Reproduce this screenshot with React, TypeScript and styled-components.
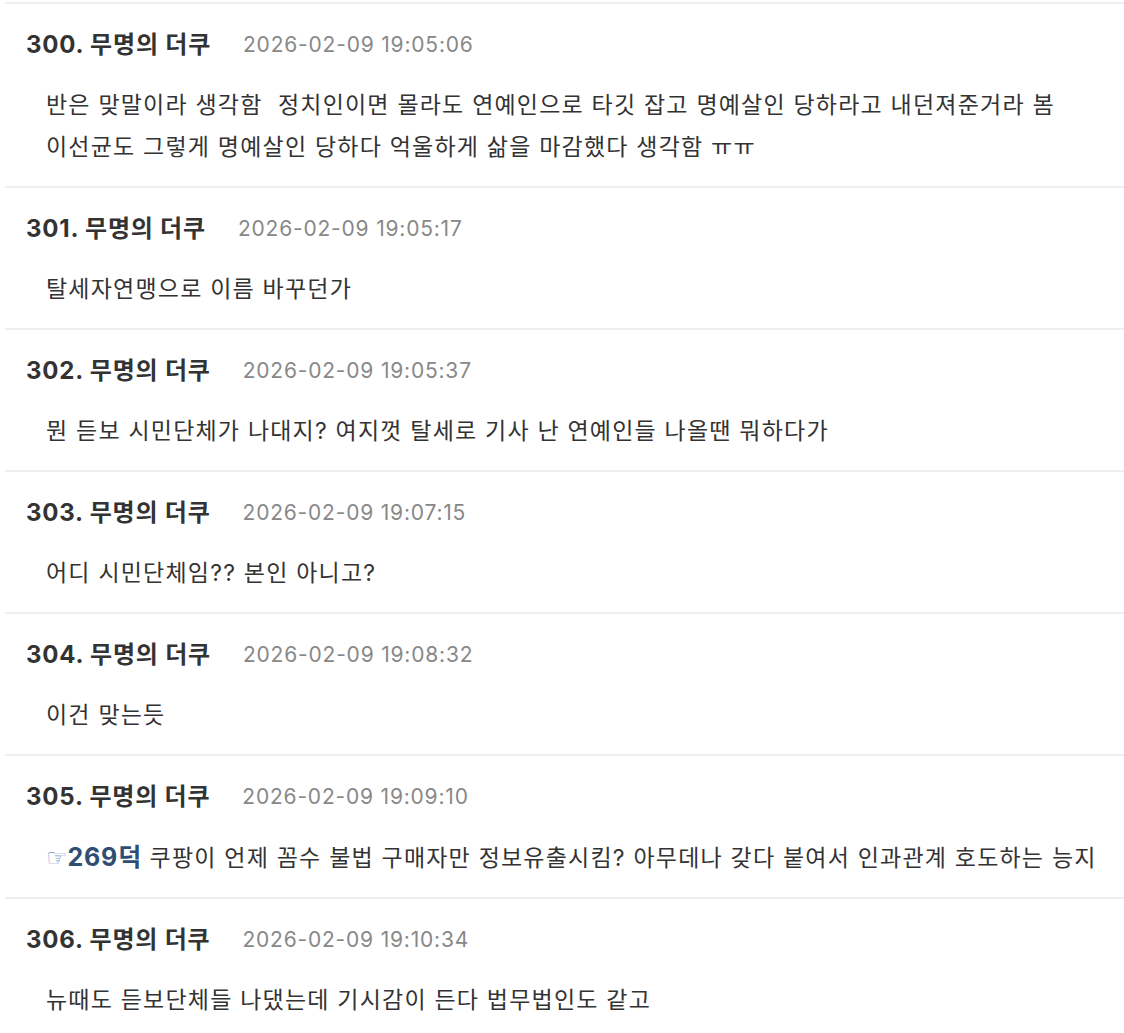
import React from "react";
import styled, { createGlobalStyle } from "styled-components";

const GlobalStyle = createGlobalStyle`
  html, body {
    margin: 0;
    padding: 0;
    background: #ffffff;
  }
  body {
    font-family: Inter, "Noto Sans CJK KR", sans-serif;
    color: #333333;
  }
`;

const List = styled.div`
  padding-top: 2px;
  margin-left: 5px;
  overflow: hidden;
  height: 1031px;
`;

const Item = styled.section`
  border-top: 2px solid #eeeeee;
  padding: 21px 0 18px 21px;
`;

const Header = styled.div`
  display: flex;
  align-items: center;
  gap: 32px;
  height: 40px;
  line-height: 40px;
`;

const Name = styled.span`
  font-family: Inter, "Noto Sans CJK KR", sans-serif;
  font-weight: 700;
  font-size: 24px;
  color: #333333;
  letter-spacing: 0.8px;
`;

const Date = styled.span`
  font-family: Inter, "Noto Sans CJK KR", sans-serif;
  font-size: 21px;
  color: #888888;
  letter-spacing: 0.8px;
`;

const Body = styled.div`
  margin-top: 19px;
  padding-left: 20px;
  font-family: Inter, "Noto Sans CJK KR", sans-serif;
  font-size: 23px;
  line-height: 42px;
  letter-spacing: 1.2px;
  color: #333333;
  white-space: pre-wrap;
`;

const Anchor = styled.span`
  color: #2f4e73;
  font-weight: 700;
  font-size: 25px;
  letter-spacing: 0.8px;
`;

const Pointer = styled.span`
  font-family: "DejaVu Sans", sans-serif;
  font-weight: 400;
  font-size: 24px;
  color: #6f93bd;
  letter-spacing: 0;
`;

type Comment = {
  no: number;
  date: string;
  lines: string[];
  ref?: string;
};

const comments: Comment[] = [
  {
    no: 300,
    date: "2026-02-09 19:05:06",
    lines: [
      "반은 맞말이라 생각함  정치인이면 몰라도 연예인으로 타깃 잡고 명예살인 당하라고 내던져준거라 봄",
      "이선균도 그렇게 명예살인 당하다 억울하게 삶을 마감했다 생각함 ㅠㅠ",
    ],
  },
  { no: 301, date: "2026-02-09 19:05:17", lines: ["탈세자연맹으로 이름 바꾸던가"] },
  {
    no: 302,
    date: "2026-02-09 19:05:37",
    lines: ["뭔 듣보 시민단체가 나대지? 여지껏 탈세로 기사 난 연예인들 나올땐 뭐하다가"],
  },
  { no: 303, date: "2026-02-09 19:07:15", lines: ["어디 시민단체임?? 본인 아니고?"] },
  { no: 304, date: "2026-02-09 19:08:32", lines: ["이건 맞는듯"] },
  {
    no: 305,
    date: "2026-02-09 19:09:10",
    ref: "269덕",
    lines: [" 쿠팡이 언제 꼼수 불법 구매자만 정보유출시킴? 아무데나 갖다 붙여서 인과관계 호도하는 능지"],
  },
  {
    no: 306,
    date: "2026-02-09 19:10:34",
    lines: ["뉴때도 듣보단체들 나댔는데 기시감이 든다 법무법인도 같고"],
  },
];

export default function App() {
  return (
    <>
      <GlobalStyle />
      <List>
        {comments.map((c) => (
          <Item key={c.no}>
            <Header>
              <Name>{c.no}. 무명의 더쿠</Name>
              <Date>{c.date}</Date>
            </Header>
            <Body>
              {c.ref && (
                <Anchor>
                  <Pointer>☞</Pointer>
                  {c.ref}
                </Anchor>
              )}
              {c.lines.join("\n")}
            </Body>
          </Item>
        ))}
      </List>
    </>
  );
}
